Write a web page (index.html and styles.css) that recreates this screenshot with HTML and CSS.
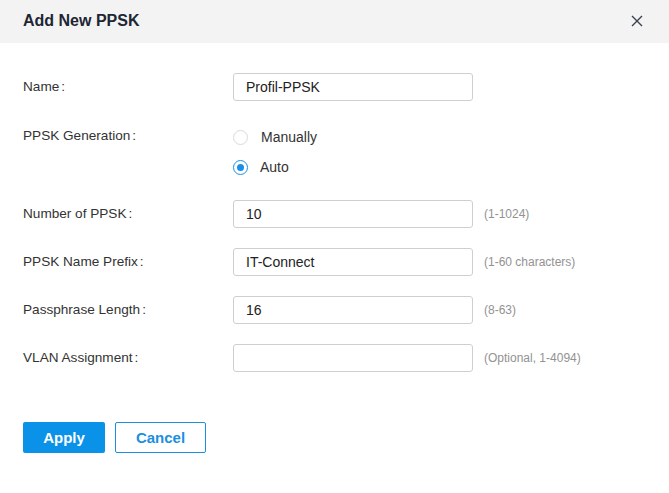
FILE: index.html
```html
<!DOCTYPE html>
<html>
<head>
<meta charset="utf-8">
<link rel="stylesheet" href="styles.css">
</head>
<body>
<div class="dialog">
  <div class="header">
    <div class="title">Add New PPSK</div>
    <div class="close">
      <svg width="12" height="12" viewBox="0 0 12 12"><path d="M1 1L11 11M11 1L1 11" stroke="#3a404c" stroke-width="1.4" fill="none"/></svg>
    </div>
  </div>
  <div class="form">
    <div class="row">
      <div class="label">Name<span class="colon">:</span></div>
      <div class="input">Profil-PPSK</div>
    </div>
    <div class="row gen">
      <div class="label">PPSK Generation<span class="colon">:</span></div>
      <div class="radios">
        <div class="radio-item"><span class="radio"></span><span class="rtext">Manually</span></div>
        <div class="radio-item"><span class="radio checked"></span><span class="rtext auto">Auto</span></div>
      </div>
    </div>
    <div class="row">
      <div class="label">Number of PPSK<span class="colon">:</span></div>
      <div class="input">10</div>
      <div class="hint">(1-1024)</div>
    </div>
    <div class="row">
      <div class="label">PPSK Name Prefix<span class="colon">:</span></div>
      <div class="input">IT-Connect</div>
      <div class="hint">(1-60 characters)</div>
    </div>
    <div class="row">
      <div class="label">Passphrase Length<span class="colon">:</span></div>
      <div class="input">16</div>
      <div class="hint">(8-63)</div>
    </div>
    <div class="row">
      <div class="label">VLAN Assignment<span class="colon">:</span></div>
      <div class="input"></div>
      <div class="hint">(Optional, 1-4094)</div>
    </div>
  </div>
  <div class="buttons">
    <div class="btn primary">Apply</div>
    <div class="btn secondary">Cancel</div>
  </div>
</div>
</body>
</html>
```
FILE: styles.css
```css
html, body {
  margin: 0;
  padding: 0;
  background: #ffffff;
}
body {
  font-family: "Liberation Sans", Arial, sans-serif;
  color: #333333;
  font-size: 13px;
}
.dialog {
  width: 669px;
}
.header {
  height: 43px;
  background: #f3f3f3;
  display: flex;
  align-items: center;
  justify-content: space-between;
  padding: 0 26px 0 23px;
}
.title {
  font-size: 16px;
  font-weight: bold;
  color: #1e2633;
  margin-top: -1px;
}
.close {
  display: flex;
  width: 12px;
  height: 12px;
  margin-top: -1px;
}
.form {
  padding: 30px 0 0 23px;
  display: flex;
  flex-direction: column;
  gap: 20px;
}
.row {
  display: flex;
  align-items: center;
  height: 28px;
}
.row.gen {
  height: auto;
  align-items: flex-start;
  margin: 1px 0 -2px;
}
.label {
  width: 210px;
  line-height: 28px;
  font-size: 13.6px;
  color: #333333;
}
.colon {
  margin-left: 2px;
}
.input {
  box-sizing: border-box;
  width: 240px;
  height: 28px;
  border: 1px solid #cfcfcf;
  border-radius: 3px;
  padding-left: 12px;
  line-height: 26px;
  font-size: 14px;
  color: #222222;
}
.hint {
  margin-left: 11px;
  font-size: 12px;
  color: #929292;
}
.radios {
  display: flex;
  flex-direction: column;
}
.radio-item {
  height: 30px;
  display: flex;
  align-items: center;
}
.radio {
  box-sizing: border-box;
  width: 15px;
  height: 15px;
  border-radius: 50%;
  border: 1px solid #dadada;
  position: relative;
}
.radio.checked {
  border-color: #1a8fe8;
}
.radio.checked::after {
  content: "";
  position: absolute;
  left: 3px;
  top: 3px;
  width: 7px;
  height: 7px;
  border-radius: 50%;
  background: #1a8fe8;
}
.rtext {
  margin-left: 13px;
  font-size: 14px;
  color: #333333;
}
.rtext.auto {
  margin-left: 12px;
  margin-top: -1px;
}
.buttons {
  display: flex;
  gap: 10px;
  padding: 50px 0 0 23px;
}
.btn {
  box-sizing: border-box;
  height: 31px;
  border-radius: 2px;
  display: flex;
  align-items: center;
  justify-content: center;
  font-size: 15px;
  font-weight: bold;
}
.primary {
  width: 82px;
  background: #0a92e8;
  color: #ffffff;
}
.secondary {
  width: 91px;
  border: 1px solid #1a8fe0;
  color: #1a8fe0;
  background: #ffffff;
}
```
